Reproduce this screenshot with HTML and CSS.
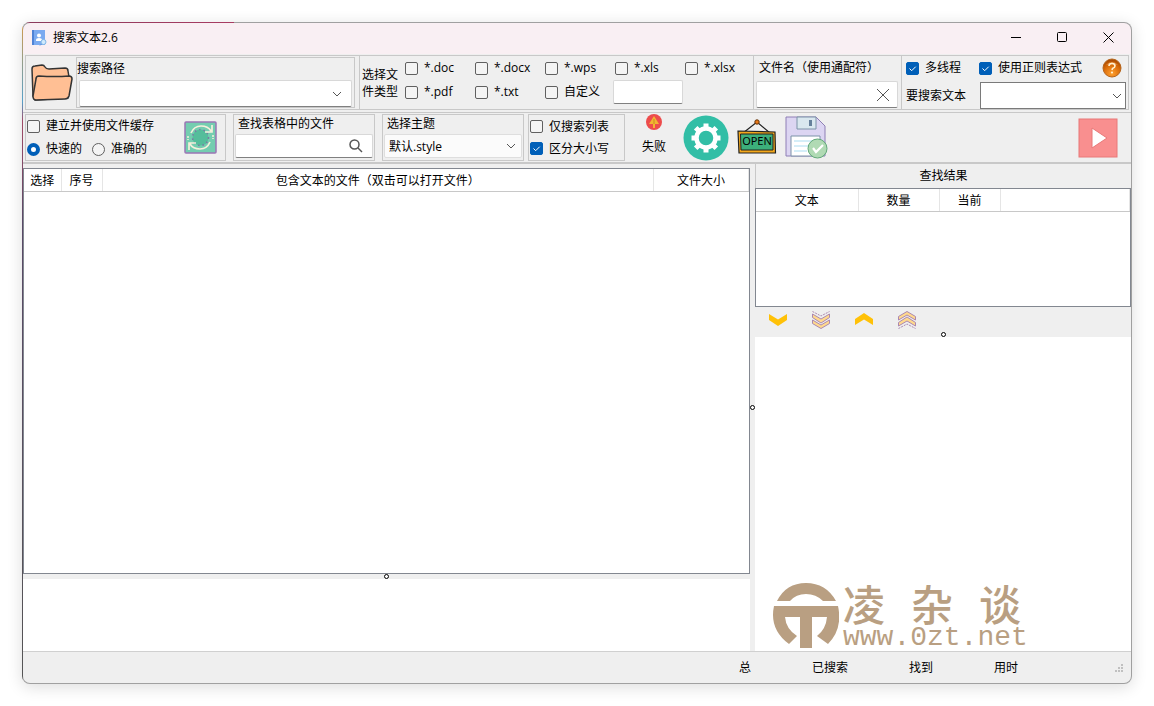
FILE: index.html
```html
<!DOCTYPE html>
<html lang="zh-CN">
<head>
  <meta charset="UTF-8" />
  <meta name="viewport" content="width=device-width, initial-scale=1.0" />
  <title>搜索文本2.6</title>
  <link rel="stylesheet" href="styles.css">
</head>
<body>
  <div class="window">
    <header class="titlebar">
      <svg class="app-icon" viewBox="0 0 16 16" aria-hidden="true">
        <rect x="1" y="0" width="13" height="15" fill="#7baaf0"/>
        <rect x="1" y="0" width="2" height="15" fill="#4f83d6"/>
        <circle cx="8" cy="5.500" r="2" fill="#fff"/>
        <path d="M5 11V10Q5 8 8 8T11 10V11Z" fill="#fff"/>
        <circle cx="12.500" cy="12" r="2.500" fill="#cfe9fb" stroke="#7fb6e6"/>
        <path d="M10.500 14L9 15.500" stroke="#5f92d8"/>
      </svg>
      <h1>搜索文本2.6</h1>
      <div class="window-buttons">
        <button aria-label="最小化"><svg viewBox="0 0 11 11"><path d="M0 5.500H10"/></svg></button>
        <button aria-label="最大化"><svg viewBox="0 0 11 11"><rect x=".5" y=".5" width="9" height="9" rx="1"/></svg></button>
        <button aria-label="关闭"><svg viewBox="0 0 11 11"><path d="M.5 .5L10.500 10.500M10.500 .5L.5 10.500"/></svg></button>
      </div>
    </header>

    <!-- Search settings -->
    <section class="search-bar">
      <div class="path-area">
        <button class="icon-btn folder-btn" aria-label="打开文件夹">
          <svg width="42" height="38" viewBox="0 0 42 38">
            <path d="M2 32L1 5Q1 2 4 2L11 1Q13 1 14 3Q15 5 18 5L34 4Q37 4 37 7L38 13L37 34L4 36Z" fill="#ffbf94" stroke="#333" stroke-width="1.500" stroke-linejoin="round"/>
            <path d="M8 12Q5 12 5 15L2 32Q2 36 5 36L34 35Q37 35 38 32L41 15Q41 12 38 12Q24 13 8 12Z" fill="#ffbf94" stroke="#333" stroke-width="1.500" stroke-linejoin="round"/>
          </svg>
        </button>
        <div class="group path-group">
          <label for="searchPath">搜索路径</label>
          <div class="field">
            <select id="searchPath"><option></option></select>
            <svg class="caret" viewBox="0 0 10 6"><path d="M1 1L5 5L9 1"/></svg>
          </div>
        </div>
      </div>

      <div class="type-area">
        <span class="type-title">选择文件类型</span>
        <div class="type-grid">
          <label class="check"><input type="checkbox">*.doc</label>
          <label class="check"><input type="checkbox">*.docx</label>
          <label class="check"><input type="checkbox">*.wps</label>
          <label class="check"><input type="checkbox">*.xls</label>
          <label class="check"><input type="checkbox">*.xlsx</label>
          <label class="check"><input type="checkbox">*.pdf</label>
          <label class="check"><input type="checkbox">*.txt</label>
          <label class="check"><input type="checkbox">自定义</label>
          <input class="custom-type" type="text" aria-label="自定义类型">
        </div>
      </div>

      <div class="name-area">
        <label for="fileName">文件名（使用通配符）</label>
        <div class="field">
          <input type="text" id="fileName">
          <svg class="clear-icon" viewBox="0 0 14 14"><path d="M1 1L13 13M13 1L1 13"/></svg>
        </div>
      </div>

      <div class="text-area">
        <div class="text-options">
          <label class="check"><input type="checkbox" checked>多线程</label>
          <label class="check"><input type="checkbox" checked>使用正则表达式</label>
          <button class="icon-btn help-btn" aria-label="帮助">
            <svg width="20" height="20" viewBox="0 0 20 20">
              <defs>
                <radialGradient id="helpFill" cx=".5" cy=".8" r=".8">
                  <stop offset="0" stop-color="#ffa030"/>
                  <stop offset=".6" stop-color="#d86a08"/>
                  <stop offset="1" stop-color="#a04400"/>
                </radialGradient>
              </defs>
              <circle cx="10" cy="10" r="9" fill="url(#helpFill)" stroke="#b5651d"/>
              <path d="M4 7Q10 1 16 7Q10 5 4 7Z" fill="#f7b36a" opacity=".6"/>
              <path d="M7 8Q7 5.500 10 5.500T13 8Q13 9.500 10.500 10.500L10 12" fill="none" stroke="#fff0cf" stroke-width="1.600"/>
              <circle cx="10" cy="14.500" r="1.100" fill="#fff0cf"/>
            </svg>
          </button>
        </div>
        <div class="text-query">
          <label for="searchText">要搜索文本</label>
          <div class="field boxed">
            <select id="searchText"><option></option></select>
            <svg class="caret" viewBox="0 0 10 6"><path d="M1 1L5 5L9 1"/></svg>
          </div>
        </div>
      </div>
    </section>

    <!-- Toolbar -->
    <section class="toolbar">
      <div class="group cache-group">
        <div class="cache-options">
          <label class="check"><input type="checkbox">建立并使用文件缓存</label>
          <div class="radios">
            <label class="check"><input type="radio" name="mode" checked>快速的</label>
            <label class="check"><input type="radio" name="mode">准确的</label>
          </div>
        </div>
        <button class="icon-btn" aria-label="刷新缓存">
          <svg width="33" height="33" viewBox="0 0 33 33">
            <rect x="1" y="1" width="31" height="31" rx="1" fill="#74cdb0" stroke="#9b76b5" stroke-width="1.500"/>
            <circle cx="16.500" cy="16.500" r="8" fill="#55bd9b"/>
            <circle cx="16.500" cy="16.500" r="8" fill="none" stroke="#7b78a4" stroke-width="1.500" stroke-dasharray="1.500 3"/>
            <path d="M7 12Q10 5 17 5T27 10M28 4V11H21M26 21Q23 28 16 28T6 23M5 29V22H12" fill="none" stroke="#f6f0dc" stroke-width="1.700"/>
            <path d="M29 14V18M4 15V19" stroke="#f6f0dc" stroke-width="1.500" stroke-dasharray="2 1"/>
          </svg>
        </button>
      </div>

      <div class="group find-group">
        <label for="findFile">查找表格中的文件</label>
        <div class="field">
          <input type="text" id="findFile">
          <svg class="search-icon" viewBox="0 0 14 14"><circle cx="5.500" cy="5.500" r="4.500"/><path d="M9 9L13 13"/></svg>
        </div>
      </div>

      <div class="group theme-group">
        <label for="theme">选择主题</label>
        <div class="field theme-field">
          <select id="theme"><option>默认.style</option></select>
          <svg class="caret" viewBox="0 0 10 6"><path d="M1 1L5 5L9 1"/></svg>
        </div>
      </div>

      <div class="group option-group">
        <label class="check"><input type="checkbox">仅搜索列表</label>
        <label class="check"><input type="checkbox" checked>区分大小写</label>
      </div>

      <button class="icon-btn fail-btn">
        <svg width="16" height="16" viewBox="0 0 16 16">
          <circle cx="8" cy="8" r="8" fill="#ed4c4c"/>
          <path d="M8 2L13 10H9V14H7V10H3Z" fill="#f2b632"/>
          <path d="M8 5V10" stroke="#c98b1c"/>
        </svg>
        失败
      </button>
      <div class="tools">
        <button class="icon-btn" aria-label="设置">
          <svg width="46" height="46" viewBox="0 0 46 46">
            <circle cx="23" cy="23" r="22.500" fill="#32bea6"/>
            <circle cx="23" cy="23" r="9.500" fill="none" stroke="#fff" stroke-width="4.500"/>
            <g stroke="#fff" stroke-width="5">
              <path d="M23 8.500V13M23 33V37.500M8.500 23H13M33 23H37.500"/>
              <path d="M12.700 12.700L16 16M30 30L33.300 33.300M33.300 12.700L30 16M16 30L12.700 33.300"/>
            </g>
          </svg>
        </button>
        <button class="icon-btn" aria-label="打开">
          <svg width="40" height="38" viewBox="0 0 40 38">
            <path d="M6 14L20 3L33 14" fill="none" stroke="#222" stroke-width="1.200"/>
            <circle cx="20" cy="3" r="2.200" fill="#e87817" stroke="#613108"/>
            <path d="M1 12L38 13L38.500 34L2 34Z" fill="#f2a71b" stroke="#222" stroke-width="1.200"/>
            <path d="M3.500 15H36V31H4Z" fill="#3caf7b" stroke="#222"/>
            <text x="20" y="26" class="open-text">OPEN</text>
          </svg>
        </button>
        <button class="icon-btn" aria-label="保存">
          <svg width="43" height="43" viewBox="0 0 43 43">
            <path d="M1 1H31L40 10V40H1Z" fill="#dcd5f2" stroke="#8e7fb5"/>
            <path d="M12 1H31V13H12Z" fill="#d9e7ef" stroke="#7c92a8"/>
            <rect x="24" y="4" width="3" height="6" fill="#66809b"/>
            <path d="M6 20H35V40H6Z" fill="#fff" stroke="#7c92a8"/>
            <path d="M9 25H30M9 30H24M9 35H22" stroke="#a9dcf1"/>
            <circle cx="32.500" cy="32.500" r="9.500" fill="#b0dab4" stroke="#5fa777"/>
            <path d="M28 32L31 36L38 29" fill="none" stroke="#fff" stroke-width="2.200"/>
          </svg>
        </button>
      </div>
      <button class="icon-btn play-btn" aria-label="开始搜索">
        <svg width="40" height="40" viewBox="0 0 40 40">
          <rect x="1" y="1" width="38" height="38" fill="#f98f8f" stroke="#e87878"/>
          <path d="M14 10L29 20L14 30Z" fill="#fff" stroke="#e87878"/>
        </svg>
      </button>
    </section>

    <main class="content">
      <div class="left-pane">
        <div class="table-box files-box">
          <table>
            <colgroup><col class="col-pick"><col class="col-no"><col><col class="col-size"></colgroup>
            <thead>
              <tr><th>选择</th><th>序号</th><th>包含文本的文件（双击可以打开文件）</th><th>文件大小</th></tr>
            </thead>
          </table>
        </div>
        <div class="splitter"><span class="handle"></span></div>
        <div class="log-box"></div>
      </div>

      <div class="splitter vertical"><span class="handle"></span></div>

      <div class="right-pane">
        <h2>查找结果</h2>
        <div class="table-box result-box">
          <table>
            <colgroup><col class="col-text"><col class="col-count"><col class="col-current"><col></colgroup>
            <thead>
              <tr><th>文本</th><th>数量</th><th>当前</th><th></th></tr>
            </thead>
          </table>
        </div>
        <div class="nav-buttons">
          <button class="icon-btn" aria-label="下一个">
            <svg width="18" height="18" viewBox="0 0 18 18"><path d="M0 3L9 8.500L18 3V9L9 15L0 9Z" fill="#ffc107"/></svg>
          </button>
          <button class="icon-btn" aria-label="最后一个">
            <svg width="18" height="18" viewBox="0 0 18 18">
              <g class="multi"><path class="thin" d="M.5 .5L9 5L17.500 .5"/><path d="M.5 3L9 8L17.500 3V6.500L9 12L.5 6.500Z"/><path d="M.5 9L9 14L17.500 9V12.500L9 17.500L.5 12.500Z"/></g>
            </svg>
          </button>
          <button class="icon-btn" aria-label="上一个">
            <svg width="18" height="18" viewBox="0 0 18 18"><path d="M0 14L9 8.500L18 14V8L9 2L0 8Z" fill="#ffc107"/></svg>
          </button>
          <button class="icon-btn" aria-label="第一个">
            <svg width="18" height="18" viewBox="0 0 18 18">
              <g class="multi"><path class="thin" d="M.5 17.500L9 13L17.500 17.500"/><path d="M.5 15L9 10L17.500 15V11.500L9 6L.5 11.500Z"/><path d="M.5 9L9 4L17.500 9V5.500L9 .5L.5 5.500Z"/></g>
            </svg>
          </button>
        </div>
        <div class="splitter"><span class="handle"></span></div>
        <div class="preview">
          <svg class="brand-mark" width="66" height="66" viewBox="0 0 66 66" aria-hidden="true">
            <path d="M4 18Q13 0 33 0T63 18H50Q43 11 33 11T17 18Z"/>
            <path d="M1 23H65Q70 46 55 61L44 53Q53 46 54 34H39V65H27V34H12Q13 46 24 53L16 61Q-4 46 1 23Z"/>
          </svg>
          <div class="brand">
            <div class="brand-name"><span>凌</span><span>杂</span><span>谈</span></div>
            <div class="brand-url">www.0zt.net</div>
          </div>
        </div>
      </div>
    </main>

    <footer class="statusbar">
      <span>总</span>
      <span>已搜索</span>
      <span>找到</span>
      <span>用时</span>
      <svg class="grip" width="8" height="8" viewBox="0 0 8 8"><path d="M6 0h2v2H6zM3 3h2v2H3zM6 3h2v2H6zM0 6h2v2H0zM3 6h2v2H3zM6 6h2v2H6z"/></svg>
    </footer>
  </div>
</body>
</html>
```
FILE: styles.css
```css
* { box-sizing: border-box; margin: 0; padding: 0; }
html, body { height: 100%; }
body { background: #fff; padding: 22px; font-family: "Open Sans", "Noto Sans CJK SC", sans-serif; font-size: 12px; line-height: 16px; color: #000; }
button, input, select { font: inherit; color: inherit; }
button { cursor: pointer; }
svg { display: block; }

.window {
  height: 100%; padding: 1px; border-radius: 8px; overflow: hidden; display: flex; flex-direction: column;
  background: linear-gradient(90deg, #8a3a5c, #a83c62) 0 0 / 212px 1px no-repeat, linear-gradient(#d39a4a, #57a0c8 12%, #a04a66 15%, #5a4a68 30%, #555 100%) 0 0 / 1px 100% no-repeat, #a0a0a0;
  box-shadow: 0 3px 16px rgba(0,0,0,0.14);
}

.titlebar { flex: none; height: 31px; padding: 0 0 2px 8px; display: flex; align-items: center; background: #f9eff3; border-radius: 7px 7px 0 0; }
.titlebar h1 { margin-left: 6px; font-size: 12px; font-weight: normal; }
.app-icon { width: 16px; height: 16px; }
.window-buttons { margin-left: auto; display: flex; }
.window-buttons button { width: 46px; height: 28px; display: flex; align-items: center; justify-content: center; border: none; background: none; }
.window-buttons svg { width: 11px; height: 11px; fill: none; stroke: #000; }

.icon-btn { flex: none; border: none; background: none; }
.group { border: 1px solid #c8c8c8; }

.check { display: flex; align-items: center; gap: 6px; white-space: nowrap; }
.check input { flex: none; appearance: none; width: 13px; height: 13px; border: 1px solid #606060; border-radius: 2px; background: #f4f4f4; }
.check input[type="radio"] { border-radius: 50%; }
.check input[type="checkbox"]:checked { border-color: #005fb8; background: #005fb8 url("data:image/svg+xml,%3Csvg xmlns='http://www.w3.org/2000/svg' viewBox='0 0 11 11'%3E%3Cpath d='M2.500 5.500L4.700 7.700L8.700 3.700' fill='none' stroke='%23fff'/%3E%3C/svg%3E"); }
.check input[type="radio"]:checked { border: 4px solid #005fb8; background: #fff; }

.field { position: relative; }
.field input, .field select, .custom-type { display: block; width: 100%; height: 27px; padding: 0 4px; appearance: none; background: #fff; border: 1px solid #d8d8d8; border-bottom-color: #808080; border-radius: 2px; }
.field svg { position: absolute; top: 0; bottom: 0; right: 10px; margin: auto 0; fill: none; stroke: #555; pointer-events: none; }
.field .caret { width: 10px; height: 6px; }
.field .clear-icon { width: 14px; height: 14px; right: 8px; }
.field .search-icon { width: 14px; height: 14px; stroke-width: 1.5; }
.boxed select { border: 1px solid #7a7a7a; border-radius: 0; }
.boxed .caret { right: 4px; }

/* search settings row */
.search-bar { flex: none; display: flex; background: #efefef; padding: 1px 2px 2px; }
.search-bar > div { border: 1px solid #c8c8c8; border-left-width: 0; }
.search-bar > .path-area { border-left-width: 1px; flex: 1; display: flex; padding: 1px 4px 1px 0; }
.folder-btn { width: 50px; padding-left: 2px; display: flex; align-items: center; justify-content: center; }
.path-group { flex: 1; padding: 3px 2px 0; }
.path-group label { display: block; margin-left: -2px; }
.path-group .field { margin-top: 3px; }
.type-area { width: 394px; display: flex; align-items: center; padding-left: 2px; }
.type-title { flex: none; width: 37px; line-height: 17px; }
.type-grid { flex: 1; align-self: flex-start; margin-left: 6px; display: grid; grid-template-columns: repeat(5, 70px); grid-auto-rows: 24px; align-items: center; }
.type-grid .custom-type { height: 24px; margin-left: -2px; }
.name-area { width: 148px; padding: 4px 3px 0 2px; }
.name-area label { display: block; margin: 0 0 5px 3px; white-space: nowrap; }
.text-area { width: 227px; padding: 2px 2px 0 4px; }
.text-options { display: flex; align-items: center; gap: 18px; height: 20px; }
.help-btn { margin: 0 4px 0 auto; }
.text-query { display: flex; align-items: center; justify-content: space-between; margin-top: 4px; }
.text-query .field { width: 146px; }

/* toolbar row */
.toolbar { flex: none; height: 52px; display: flex; align-items: center; background: #efefef; border-top: 1px solid #c8c8c8; border-bottom: 2px solid #c8c8c8; padding: 0 13px 0 2px; }
.toolbar .group { height: 47px; flex: none; }
.cache-group { width: 201px; display: flex; align-items: center; justify-content: space-between; padding: 0 8px 0 1px; }
.cache-options { display: flex; flex-direction: column; gap: 7px; }
.radios { display: flex; gap: 10px; }
.find-group { width: 142px; margin-left: 7px; padding: 1px; }
.theme-group { width: 142px; margin-left: 7px; padding: 1px; }
.find-group > label, .theme-group > label { display: block; margin-left: 3px; }
.find-group .field, .theme-group .field { margin-top: 2px; }
.find-group .field input, .theme-group .field select { height: 24px; }
.theme-field select { padding-top: 2px; background: #fbfbfb; border-color: #dedede; }
.theme-field .caret { right: 6px; }
.option-group { width: 97px; margin-left: 4px; padding: 0 1px; display: flex; flex-direction: column; justify-content: center; gap: 6px; }
.fail-btn { width: 58px; height: 47px; display: flex; flex-direction: column; align-items: center; gap: 9px; }
.tools { display: flex; align-items: center; gap: 8px; }
.play-btn { margin-left: auto; }
.open-text { font-family: "Noto Sans", sans-serif; font-size: 11px; text-anchor: middle; }

/* panes */
.content { flex: 1; min-height: 0; display: grid; grid-template-columns: 727fr 5px 376fr; background: #efefef; }
.left-pane { display: flex; flex-direction: column; padding-top: 4px; min-width: 0; }
.right-pane { display: flex; flex-direction: column; min-width: 0; }
.right-pane h2 { flex: none; height: 24px; line-height: 24px; text-align: center; font-size: 12px; font-weight: normal; border-left: 1px solid #c8c8c8; }
.table-box { background: #fff; border: 1px solid #828790; }
.files-box { flex: 1; }
.result-box { flex: none; height: 119px; }
table { width: 100%; table-layout: fixed; border-collapse: collapse; }
th { height: 22px; padding-top: 2px; font-weight: normal; white-space: nowrap; border-right: 1px solid #e5e5e5; border-bottom: 1px solid #c8c8c8; }
.col-pick { width: 37px; }
.col-no { width: 41px; }
.col-size { width: 95px; }
.col-text { width: 102px; }
.col-count { width: 81px; }
.col-current { width: 61px; }

.splitter { flex: none; height: 5px; display: flex; align-items: center; justify-content: center; }
.splitter.vertical { height: auto; }
.handle { flex: none; width: 5px; height: 5px; border: 1px solid #000; border-radius: 50%; background: #fff; }
.log-box { flex: none; height: 72px; background: #fff; }
.nav-buttons { flex: none; height: 25px; padding-left: 14px; display: flex; align-items: center; gap: 25px; }
.multi path { fill: #ffd98c; stroke: #ab87b0; }
.multi .thin { fill: none; stroke-dasharray: 2 1; }

.preview { flex: 1; background: #fff; display: flex; align-items: flex-end; padding-left: 18px; }
.brand-mark { margin-bottom: 2px; fill: #b99f82; }
.brand { margin-left: 4px; color: #b99f82; }
.brand-name { display: flex; gap: 26px; font-family: "Noto Sans CJK SC", sans-serif; font-size: 42px; line-height: 44px; font-weight: 500; }
.brand-url { font-family: "Liberation Mono", monospace; font-size: 28px; line-height: 26px; }

.statusbar { flex: none; height: 32px; display: flex; align-items: center; justify-content: flex-end; gap: 61px; padding-right: 8px; background: #efefef; border-top: 1px solid #d0d0d0; border-radius: 0 0 7px 7px; }
.grip { margin-left: 36px; fill: #c0c0c0; }
```
